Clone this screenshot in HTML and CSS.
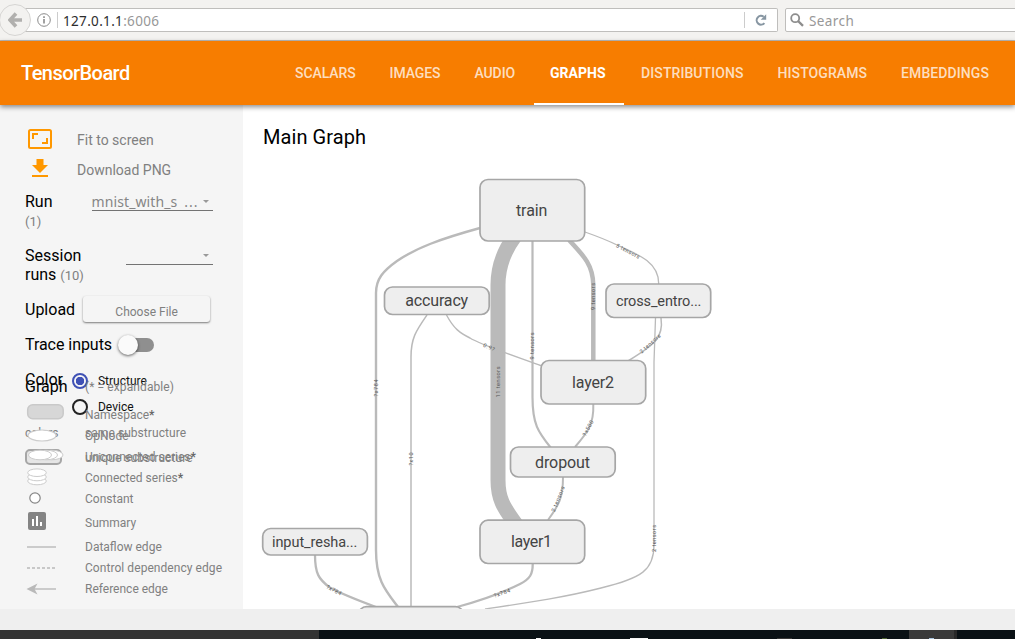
FILE: index.html
```html
<!DOCTYPE html>
<html lang="en">
<head>
<meta charset="utf-8">
<title>TensorBoard</title>
<link rel="stylesheet" href="styles.css">
</head>
<body>
<div class="browser">
  <div class="address">
    <svg class="info" width="14" height="14" viewBox="0 0 14 14"><circle cx="7" cy="7" r="6.3" fill="none" stroke="#8a8a8a"/><path d="M7 6v4.6M7 3.2v1.7" stroke="#8a8a8a" stroke-width="1.6"/></svg>
    <span class="divider"></span>
    <span class="url">127.0.1.1<span class="port">:6006</span></span>
    <span class="divider"></span>
    <svg class="reload" width="12" height="12" viewBox="0 0 12 12"><path d="M9.4 9.1A4.4 4.4 0 1 1 8.7 2.7" fill="none" stroke="#8796a2" stroke-width="2"/><path d="M11.2.3v5.5H5.7z" fill="#8796a2"/></svg>
  </div>
  <div class="search">
    <svg width="14" height="14" viewBox="0 0 14 14"><circle cx="5.2" cy="5.2" r="4" fill="none" stroke="#8d8d8d" stroke-width="1.8"/><path d="M8 8l5 4.8" stroke="#8d8d8d" stroke-width="2.4"/></svg>
    <span>Search</span>
  </div>
  <div class="back"><svg width="14" height="16" viewBox="0 0 14 16"><path d="M8 1.5L2 8l6 6.500M2 8h12" fill="none" stroke="#b1b0ae" stroke-width="3.600"/></svg></div>
</div>
<header class="header">
  <h1 class="brand">TensorBoard</h1>
  <nav class="tabs">
    <a class="tab">SCALARS</a><a class="tab">IMAGES</a><a class="tab">AUDIO</a><a class="tab active">GRAPHS</a><a class="tab wide-tab">DISTRIBUTIONS</a><a class="tab wide-tab">HISTOGRAMS</a><a class="tab wide-tab">EMBEDDINGS</a>
  </nav>
</header>
<main class="main">
  <aside class="sidebar">
    <div class="action"><svg width="24" height="20" viewBox="0 0 24 20"><rect x="1" y="1" width="22" height="18" rx="1.500" fill="none" stroke="#ff9800" stroke-width="2"/><path d="M5 10V5h5M14 14h5v-5" fill="none" stroke="#ff9800" stroke-width="2"/></svg><span>Fit to screen</span></div>
    <div class="action"><svg width="24" height="20" viewBox="0 0 24 20"><path d="M8.500 0h7v6H20l-8 8-8-8h4.500zM4 16h16v2H4z" fill="#ff9800"/></svg><span>Download PNG</span></div>
    <div class="field run"><div class="label">Run<br><small>(1)</small></div><div class="select wide"><span>mnist_with_s</span><span class="dots">...</span><i class="caret"></i></div></div>
    <div class="field session"><div class="label">Session<br>runs <small>(10)</small></div><div class="select"><i class="caret"></i></div></div>
    <div class="field upload"><div class="label">Upload</div><button class="choose">Choose File</button></div>
    <div class="field trace"><div class="label">Trace inputs</div><span class="toggle"><i></i></span></div>
    <div class="field color"><div class="label">Color</div>
      <div class="radios"><div class="radio"><i class="on"></i><span>Structure</span></div><div class="radio"><i></i><span>Device</span></div></div>
    </div>
    <div class="color-legend">
      <div class="row"><span class="key">colors</span><span>same substructure</span></div>
      <div class="row"><span class="key"><i class="unique"></i></span><span>unique substructure</span></div>
    </div>
    <div class="legend">
      <div class="row title"><span class="key">Graph</span><span>(* = expandable)</span></div>
      <div class="row"><span class="key up"><svg width="39" height="20"><rect x="2.700" y="0.800" width="35.500" height="14" rx="5" fill="#d7d7d7" stroke="#c9c9c9" stroke-width="1.500"/></svg></span><span>Namespace<b>*</b></span></div>
      <div class="row"><span class="key"><svg width="39" height="20"><ellipse cx="17" cy="9.500" rx="14" ry="5.500" fill="#fff" stroke="#ccc" stroke-width="1.200"/></svg></span><span>OpNode</span></div>
      <div class="row"><span class="key"><svg width="39" height="20"><g fill="#fff" stroke="#ccc"><ellipse cx="26.500" cy="8" rx="11.500" ry="4.800"/><ellipse cx="21" cy="8" rx="11.500" ry="4.800"/><ellipse cx="15" cy="8" rx="11.500" ry="4.800"/></g></svg></span><span>Unconnected series<b>*</b></span></div>
      <div class="row"><span class="key"><svg width="39" height="20"><g fill="#fff" stroke="#ccc"><ellipse cx="12" cy="13" rx="9.300" ry="3.800"/><ellipse cx="12" cy="9" rx="9.300" ry="3.800"/><ellipse cx="12" cy="4.700" rx="9.300" ry="3.800"/></g></svg></span><span>Connected series<b>*</b></span></div>
      <div class="row"><span class="key"><svg width="39" height="20"><circle cx="10" cy="9" r="5.200" fill="#fff" stroke="#858585" stroke-width="1.200"/></svg></span><span>Constant</span></div>
      <div class="row tall"><span class="key up"><svg width="39" height="20"><rect x="3" y="0" width="18" height="18" rx="2" fill="#848484"/><path d="M8 7v7M12 4v10M16 10v4" stroke="#fff" stroke-width="2"/></svg></span><span>Summary</span></div>
      <div class="row"><span class="key"><svg width="39" height="20"><path d="M2 10h29" stroke="#b9b9b9" stroke-width="1.400"/></svg></span><span>Dataflow edge</span></div>
      <div class="row loose"><span class="key"><svg width="39" height="20"><path d="M2 10h28" stroke="#b9b9b9" stroke-width="1.300" stroke-dasharray="3 2"/></svg></span><span>Control dependency edge</span></div>
      <div class="row"><span class="key"><svg width="39" height="20"><path d="M8 10h23" stroke="#b9b9b9" stroke-width="1.400"/><path d="M1.500 10L12.500 4.500 9.500 10l3 5.500z" fill="#b9b9b9"/></svg></span><span>Reference edge</span></div>
    </div>
  </aside>
  <section class="canvas">
    <h2 class="heading">Main Graph</h2>
    <svg class="graph" width="772" height="449" viewBox="243 160 772 449">
      <g class="edges">
        <path d="M480 228C440 239 416 248 397 261C383 271 376 279 376 293V550C376 580 385 590 398 607" stroke-width="2.400"/>
        <path d="M515 236C503 252 498 268 498 285V480C498 502 506 510 517 526" stroke-width="15"/>
        <path d="M532.500 240V397C532.500 424 538 432 551 448" stroke-width="2.200"/>
        <path d="M569 240C584 256 593 265 593.300 285V362" stroke-width="4.500"/>
        <path d="M585 232C602 238 609 241 617 245C640 255 659 263 658.700 284" stroke-width="1.300"/>
        <path d="M427 315C416 331 411 338 411 357V607" stroke-width="1.500"/>
        <path d="M446.500 315C454 329 460 333 470 338C479 344 506 353 542 366" stroke-width="1.400"/>
        <path d="M661 318C664 338 654 345 628 361" stroke-width="1.500"/>
        <path d="M655.500 318L654 362V545C654 570 642 578 601 588C566 597 532 602 485 609" stroke-width="1.300"/>
        <path d="M593.300 404C594 424 588 432 575 447" stroke-width="2"/>
        <path d="M563 477C563 498 559 505 548 520" stroke-width="2"/>
        <path d="M532.700 563C533 574 530 579 520 584C504 592 479 601 457 607" stroke-width="2.300"/>
        <path d="M315 555C315 574 319 579 329 587C338 592 357 600 376 607" stroke-width="2.300"/>
      </g>
      <g class="edge-labels">
        <text transform="translate(376 388) rotate(-90)" textLength="17">?x784</text>
        <text transform="translate(411 459) rotate(-90)" textLength="13">?x10</text>
        <text transform="translate(498 382) rotate(-90)" textLength="31">11 tensors</text>
        <text transform="translate(532 346) rotate(-90)" textLength="27">9 tensors</text>
        <text transform="translate(593 296.500) rotate(-90)" textLength="27">9 tensors</text>
        <text transform="translate(628 251) rotate(28)" textLength="26">5 tensors</text>
        <text transform="translate(489 347) rotate(24)" textLength="12">0.9?</text>
        <text transform="translate(650 343.500) rotate(-42)" textLength="26">2 tensors</text>
        <text transform="translate(588 428) rotate(-62)" textLength="17">?x500</text>
        <text transform="translate(558 499) rotate(-68)" textLength="27">2 tensors</text>
        <text transform="translate(654 538.500) rotate(-90)" textLength="27">2 tensors</text>
        <text transform="translate(502 593) rotate(-20)" textLength="17">?x784</text>
        <text transform="translate(334 590) rotate(28)" textLength="16">?x784</text>
      </g>
      <g class="nodes">
        <rect x="480" y="179.500" width="104.700" height="61.500" rx="8"/>
        <rect x="384.500" y="287" width="104.700" height="27.500" rx="8"/>
        <rect x="606" y="284" width="104.700" height="33.500" rx="8"/>
        <rect x="541" y="360.500" width="104.700" height="43.500" rx="8"/>
        <rect x="510.500" y="447" width="104.700" height="30" rx="8"/>
        <rect x="480" y="520.200" width="104.700" height="43.300" rx="8"/>
        <rect x="262.700" y="528.500" width="104.700" height="26.500" rx="8"/>
        <rect x="358.500" y="606.700" width="105" height="30" rx="8"/>
      </g>
      <g class="node-labels">
        <text x="531.700" y="216" textLength="31.500">train</text>
        <text x="436.700" y="306" textLength="63">accuracy</text>
        <text x="658.700" y="306" textLength="85.500" class="small">cross_entro...</text>
        <text x="593" y="388" textLength="42">layer2</text>
        <text x="562.500" y="468" textLength="55">dropout</text>
        <text x="531.500" y="547" textLength="41">layer1</text>
        <text x="314.700" y="547" textLength="85.500" class="small">input_resha...</text>
      </g>
    </svg>
  </section>
</main>
<footer class="status"></footer>
<div class="desktop"><svg width="1015" height="9"><rect width="319" height="9" fill="#333"/><rect x="909" width="45" height="9" fill="#3a3a3a"/><rect x="954" width="3" height="9" fill="#292929"/><path d="M630 8.500h18M536 8.500h5" stroke="#f5f5f5"/><path d="M777 8.500h15" stroke="#383838"/><path d="M882 8.500h5" stroke="#4c6333"/><path d="M929 8.500h5" stroke="#a7c3de"/></svg></div>
</body>
</html>
```
FILE: styles.css
```css
* { box-sizing: border-box; }
body { margin: 0; width: 1015px; height: 639px; overflow: hidden; font-family: Roboto, sans-serif; background: #fff; }
.browser { position: relative; height: 41px; padding-top: 8px; display: flex; gap: 7px; background: #f3f2f0; border-bottom: 1px solid #bbb9b6; font-family: "Noto Sans", sans-serif; font-size: 14px; color: #989898; }
.address { width: 763px; flex: none; margin-left: 15px; height: 24px; display: flex; align-items: center; background: #fff; border: 1px solid #bfbebc; border-left: 0; border-radius: 0 2px 2px 0; padding-left: 22px; }
.divider { width: 1px; height: 16px; background: #ccc; margin-left: 6px; }
.url { flex: 1; margin-left: 5px; padding-top: 1px; color: #2d2d2d; font-size: 13.500px; letter-spacing: .33px; }
.port { color: #989898; }
.reload { margin: 0 10px 0 10px; }
.search { width: 240px; flex: none; height: 24px; display: flex; align-items: center; gap: 5px; padding-left: 4px; background: #fff; border: 1px solid #bfbebc; border-radius: 2px; }
.search span { padding-top: 1px; font-size: 13.500px; letter-spacing: .4px; }
.back { position: absolute; left: -1px; top: 4px; width: 32px; height: 32px; border: 1px solid #d6d5d3; border-radius: 50%; background: #f3f2f0; display: flex; align-items: center; justify-content: center; }
.header { position: relative; z-index: 1; height: 64px; padding-left: 21px; background: #f77d00; color: #fff; display: flex; align-items: center; box-shadow: 0 2px 5px rgba(0,0,0,.45); }
.brand { margin: 0; width: 258px; font-size: 20px; font-weight: 500; letter-spacing: -.55px; }
.tabs { display: flex; height: 64px; }
.tab { display: flex; align-items: center; padding: 0 16px; margin-right: 2px; font-size: 14px; font-weight: 500; letter-spacing: -.09px; color: rgba(255,255,255,.76); }
.tab.active { color: #fff; font-weight: 700; width: 90px; margin: 0 1px; letter-spacing: 0; border-bottom: 2px solid #fff; padding-top: 2px; }
.tab.wide-tab { letter-spacing: .08px; }
.main { height: 504px; display: flex; }
.sidebar { position: relative; width: 243px; flex: none; padding: 20px 0 0 25px; background: #f5f5f5; overflow: hidden; }
.action { height: 30px; display: flex; align-items: center; gap: 25px; padding-left: 3px; font-size: 14px; color: #808080; }
.action svg { margin-top: -2px; }
.field { display: flex; align-items: flex-start; }
.label { font-size: 16px; line-height: 19px; color: #000; white-space: nowrap; }
.label small { font-size: 13px; color: #808080; }
.run { height: 54px; padding-top: 7px; }
.select { width: 87px; height: 19px; margin-left: 42px; border-bottom: 1px solid #737373; display: flex; align-items: center; padding-right: 4px; font: 14px "Noto Sans", sans-serif; color: #858585; }
.wide { width: 121px; margin-left: 39px; letter-spacing: .1px; }
.dots { margin-left: 7px; letter-spacing: 1px; }
.caret { margin-left: auto; border: 3.500px solid transparent; border-top-color: #999; border-bottom: 0; }
.session { height: 54px; padding-top: 7px; }
.upload { height: 37px; padding-top: 2px; gap: 7px; }
.upload .label { margin-top: 5px; }
.choose { width: 127px; height: 26px; margin: 1px 0 0 1px; border: 0; border-radius: 3px; background: #f5f5f5; box-shadow: 0 1px 2px rgba(0,0,0,.5); color: #808080; font: 12px Roboto, sans-serif; padding: 6px 0 0; }
.trace { height: 35px; align-items: center; gap: 8px; padding-bottom: 6px; }
.trace .label { letter-spacing: -.05px; }
.toggle { width: 34px; height: 14px; border-radius: 7px; background: #8f8f8f; display: flex; align-items: center; }
.toggle i { width: 20px; height: 20px; margin-left: -2px; flex: none; border-radius: 50%; background: #fafafa; box-shadow: 0 1px 3px rgba(0,0,0,.6); }
.color { gap: 9px; padding-top: 3px; }
.color .label { padding-top: 2px; }
.radio { display: flex; align-items: center; gap: 10px; height: 26px; font-size: 12px; color: #111; }
.radio i { width: 16px; height: 16px; border: 2px solid #222; border-radius: 50%; }
.radio .on { border-color: #3f51b5; background: radial-gradient(circle, #3f51b5 0 4px, transparent 4.500px); }
.legend, .color-legend { position: absolute; left: 25px; font-size: 12px; color: #808080; white-space: nowrap; }
.legend { top: 264px; }
.color-legend { top: 315px; letter-spacing: .06px; }
.row { display: flex; align-items: center; height: 21px; }
.key { width: 60px; height: 20px; display: flex; align-items: center; }
.loose { letter-spacing: .06px; }
.legend .title { height: 35px; letter-spacing: .1px; }
.title .key { font-size: 16px; letter-spacing: 0; color: #000; }
.up svg { margin-top: -2px; }
.tall { height: 27px !important; }
.color-legend .row { height: 25px; }
.unique { width: 37px; height: 16px; margin-top: -2px; border: 2px solid #a6a6a6; border-radius: 5px; background: #e5e5e5; }
.row b { color: #666; }
.canvas { flex: 1; }
.heading { margin: 0; height: 55px; padding: 20px 0 0 20px; font-size: 20px; line-height: 24px; font-weight: 400; letter-spacing: .08px; color: #000; }
.graph { display: block; }
.edges { fill: none; stroke: #bababa; }
.edge-labels { font-size: 5.500px; fill: #555; text-anchor: middle; dominant-baseline: central; }
.nodes { fill: #eee; stroke: #a6a6a6; stroke-width: 1.700; }
.node-labels { font-size: 16px; fill: #444; text-anchor: middle; }
.node-labels .small { font-size: 14.500px; }
.status { height: 21px; background: #efefef; }
.desktop { height: 9px; background: #0a1115; }
.desktop svg { display: block; }
```
